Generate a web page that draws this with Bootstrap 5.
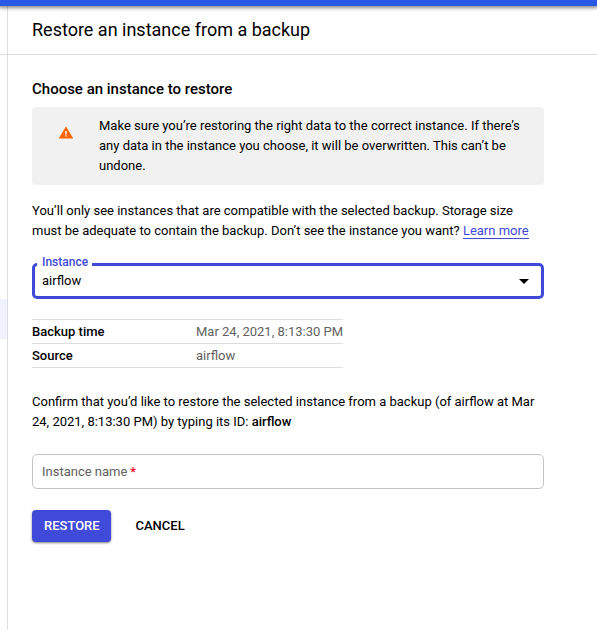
<!DOCTYPE html>
<html lang="en">
<head>
<meta charset="utf-8">
<meta name="viewport" content="width=device-width, initial-scale=1">
<title>Restore an instance from a backup</title>
<link href="https://cdn.jsdelivr.net/npm/bootstrap@5.3.0/dist/css/bootstrap.min.css" rel="stylesheet">
<style>
  body { font: 400 13px/20px Roboto, sans-serif; color: #000; background: #fff; overflow: hidden; }
  .topbar { height: 6px; background: #285ae6; box-shadow: 0 1px 3px 1px rgba(0,0,0,.3), 0 2px 5px rgba(0,0,0,.2); z-index: 2; }
  .side { width: 8px; border-right: 1px solid #dedede; }
  .side-head, .page-head { height: 49px; border-bottom: 1px solid #dedede; }
  .side-active { height: 40px; margin-top: 244px; background: #f0f3ff; }
  .page-head h1 { font-size: 18px; line-height: 24px; font-weight: 400; }
  .page-body { width: 536px; padding: 24px 0 0 24px; }
  .page-body h2 { font-size: 15px; line-height: 20px; font-weight: 500; margin: 0 0 8px; }
  .notice { background: #f1f1f1; border-radius: 4px; padding: 9px 20px 9px 27px; margin-bottom: 16px; }
  .notice svg { margin: 10px 26px 0 0; }
  .learn { color: #3f4bd8; border-bottom: 1px solid #3f4bd8; }
  .picker { height: 36px; margin-top: 22px; border: 3px solid #3f4bd8; border-radius: 5px; padding: 0 12px 0 7px; }
  .picker label { left: 2px; top: -12px; padding: 0 3px 0 5px; width: 55px; line-height: 16px; font-size: 12px; font-weight: 500; color: #3f4bd8; background: #fff; }
  .details { width: 311px; margin: 20px 0 24px; border-top: 1px solid #dedede; }
  .details > div { height: 24px; line-height: 23px; border-bottom: 1px solid #dedede; }
  .details dt { width: 164px; flex-shrink: 0; font-weight: 500; }
  .details dd { color: #616161; }
  .strong { font-weight: 500; }
  .name-field { height: 35px; margin: 22px 0 21px; padding: 0 9px; border: 1px solid #c4c4c4; border-radius: 5px; color: #616161; }
  .req { color: #f00020; font-weight: 500; margin-left: -.5px; }
  .action { height: 32px; padding: 0 12px; border: 0; border-radius: 4px; font-size: 13px; line-height: 32px; font-weight: 500; }
  .action-main { width: 79px; color: #fff; background: #3f4bd8; box-shadow: 0 1px 2px rgba(0,0,0,.35), 0 1px 3px rgba(0,0,0,.2); }
  .action-plain { margin-left: 12.5px; }
</style>
</head>
<body>
<div class="d-flex flex-column vh-100">
  <div class="topbar position-relative flex-shrink-0"></div>
  <div class="d-flex flex-grow-1">
    <aside class="side flex-shrink-0">
      <div class="side-head"></div>
      <div class="side-active"></div>
    </aside>
    <main class="flex-grow-1">
      <header class="page-head d-flex align-items-center ps-4"><h1 class="m-0">Restore an instance from a backup</h1></header>
      <section class="page-body">
        <h2>Choose an instance to restore</h2>
        <div class="notice d-flex align-items-start">
          <svg class="flex-shrink-0" width="14" height="14" viewBox="0 0 14 14" aria-hidden="true"><path fill="#fa6400" d="M7 .4 14.2 12.4H-.2Z"/><path fill="#fff" d="M6.3 5h1.4v3.4H6.3zM6.3 9.3h1.4v1.3H6.3z"/></svg>
          <div>Make sure you’re restoring the right data to the correct instance. If there’s any data in the instance you choose, it will be overwritten. This can’t be undone.</div>
        </div>
        <p class="m-0">You’ll only see instances that are compatible with the selected backup. Storage size must be adequate to contain the backup. Don’t see the instance you want? <a href="#" class="learn text-decoration-none">Learn more</a></p>
        <div class="picker position-relative d-flex align-items-center justify-content-between">
          <label class="position-absolute">Instance</label>
          <span>airflow</span>
          <svg width="10" height="5" viewBox="0 0 10 5" aria-hidden="true"><path d="M0 0h10L5 5Z"/></svg>
        </div>
        <dl class="details">
          <div class="d-flex"><dt>Backup time</dt><dd class="m-0 text-nowrap">Mar 24, 2021, 8:13:30 PM</dd></div>
          <div class="d-flex"><dt>Source</dt><dd class="m-0 text-nowrap">airflow</dd></div>
        </dl>
        <p class="m-0">Confirm that you’d like to restore the selected instance from a backup (of airflow at Mar 24, 2021, 8:13:30 PM) by typing its ID: <span class="strong">airflow</span></p>
        <div class="name-field d-flex align-items-center"><span>Instance name <span class="req">*</span></span></div>
        <div class="d-flex">
          <button type="button" class="btn action action-main">RESTORE</button>
          <button type="button" class="btn action action-plain text-black">CANCEL</button>
        </div>
      </section>
    </main>
  </div>
</div>
<script src="https://cdn.jsdelivr.net/npm/bootstrap@5.3.0/dist/js/bootstrap.bundle.min.js"></script>
</body>
</html>
